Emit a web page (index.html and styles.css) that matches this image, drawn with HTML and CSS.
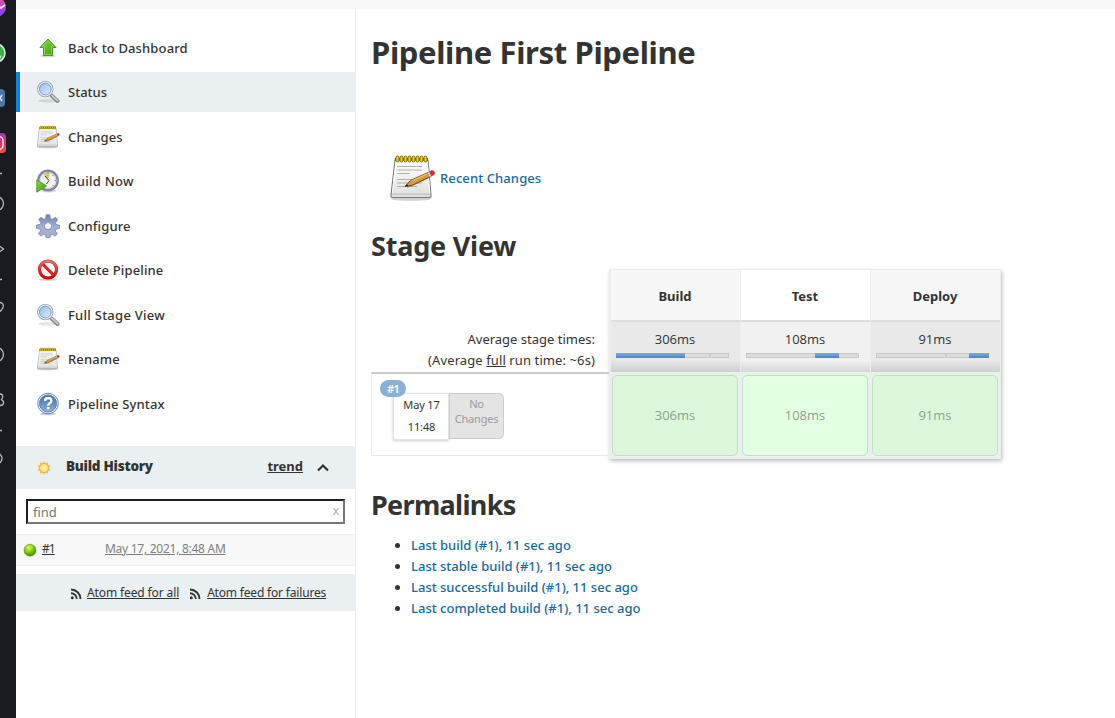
FILE: index.html
```
<!DOCTYPE html>
<html lang="en">
<head>
<meta charset="utf-8">
<title>First Pipeline</title>
<link rel="stylesheet" href="styles.css">
</head>
<body>
<svg class="defs" width="0" height="0" aria-hidden="true">
  <defs>
    <linearGradient id="gGreen" x1="0" y1="0" x2="1" y2="1"><stop offset="0" stop-color="#8fd85b"/><stop offset=".55" stop-color="#5cba1d"/><stop offset="1" stop-color="#3f9612"/></linearGradient>
    <linearGradient id="gLens" x1="0" y1="0" x2="1" y2="1"><stop offset="0" stop-color="#8fb6ea"/><stop offset="1" stop-color="#e6f2ff"/></linearGradient>
    <linearGradient id="gPaper" x1="0" y1="0" x2="0" y2="1"><stop offset="0" stop-color="#ffffff"/><stop offset="1" stop-color="#dededc"/></linearGradient>
    <linearGradient id="gGear" x1="0" y1="0" x2="0" y2="1"><stop offset="0" stop-color="#6685b1"/><stop offset=".5" stop-color="#a4afd3"/><stop offset="1" stop-color="#a9abd2"/></linearGradient>
    <linearGradient id="gRed" x1="0" y1="0" x2="0" y2="1"><stop offset="0" stop-color="#e96a6a"/><stop offset="1" stop-color="#cb0808"/></linearGradient>
    <linearGradient id="gHelp" x1="0" y1="0" x2="0" y2="1"><stop offset="0" stop-color="#3f6dab"/><stop offset="1" stop-color="#8fb1dc"/></linearGradient>
    <linearGradient id="gInsta" x1="0" y1="0" x2="0" y2="1"><stop offset="0" stop-color="#a335b8"/><stop offset=".5" stop-color="#e02c6d"/><stop offset="1" stop-color="#f4583c"/></linearGradient>
    <linearGradient id="gMess" x1="0" y1="0" x2="0" y2="1"><stop offset="0" stop-color="#f25a86"/><stop offset=".5" stop-color="#c83be0"/><stop offset="1" stop-color="#5a4cf5"/></linearGradient>
    <radialGradient id="gBall" cx=".4" cy=".3" r=".7"><stop offset="0" stop-color="#e4f96a"/><stop offset=".4" stop-color="#9bd817"/><stop offset="1" stop-color="#3d8500"/></radialGradient>
    <radialGradient id="gSun"><stop offset="0" stop-color="#fffbd0"/><stop offset="1" stop-color="#ffd84a"/></radialGradient>
    <symbol id="search" viewBox="0 0 24 24">
      <ellipse cx="12" cy="20.700" rx="10" ry="1.700" fill="#000" opacity=".1"/>
      <path d="M15.500 15.500L21.500 21" stroke="#85898b" stroke-width="4" stroke-linecap="round"/>
      <path d="M16 15.500L21.500 20.500" stroke="#c6c8c9" stroke-width="1.800" stroke-linecap="round"/>
      <circle cx="9.300" cy="9.100" r="7.300" fill="url(#gLens)" stroke="#9ea3a5" stroke-width="1.800"/>
      <circle cx="9.300" cy="9.100" r="6.800" fill="none" stroke="#f1f3f3" stroke-width="1.100"/>
      <circle cx="9.300" cy="9.100" r="5.800" fill="none" stroke="#6b92c9" stroke-width=".8"/>
    </symbol>
    <symbol id="notepad" viewBox="0 0 48 48">
      <ellipse cx="23" cy="45" rx="20" ry="1.700" fill="#000" opacity=".18"/>
      <path d="M7 6h33l3 35v1.500q0 1-1.500 1H4.500q-1.500 0-1.500-1V41Z" fill="url(#gPaper)" stroke="#777975" stroke-width="1.100"/>
      <path d="M8 7.500h31.300l2.500 32.200H4.400Z" fill="none" stroke="#fff"/>
      <path d="M4 40h38" stroke="#aaa"/>
      <path d="M9 12.500h25M9 16h25M9 19.500h13M9 25.500h25M9 29h25M9 32.500h20" stroke="#b0b0b0" stroke-width="1"/>
      <path d="M7 5.500h33" stroke="#7d7434" stroke-width="3"/>
      <g fill="#eed12b" stroke="#6e6000" stroke-width=".9"><rect x="8" y="2" width="3" height="6" rx="1.500"/><rect x="12" y="2" width="3" height="6" rx="1.500"/><rect x="16" y="2" width="3" height="6" rx="1.500"/><rect x="20" y="2" width="3" height="6" rx="1.500"/><rect x="24" y="2" width="3" height="6" rx="1.500"/><rect x="28" y="2" width="3" height="6" rx="1.500"/><rect x="32" y="2" width="3" height="6" rx="1.500"/><rect x="36" y="2" width="3" height="6" rx="1.500"/></g>
      <path d="M19 33L44 22" stroke="#000" stroke-width="2" opacity=".18"/>
      <path d="M17 32.500l5.500-6 17.500-8 2 4.300L25 31Z" fill="#d69b38" stroke="#6b4410" stroke-width="1"/>
      <path d="M23.500 27l16-7.300" stroke="#f0c274" stroke-width="1.300"/>
      <path d="M17 32.500l2-2.400 1.200 1.900Z" fill="#222"/>
      <path d="M39.500 18.600l2 4.300 2-1-2-4.300Z" fill="#ddd" stroke="#888" stroke-width=".5"/>
      <path d="M41.500 17.600l2 4.300 2.300-1.100q1.500-1 .7-2.700-.9-1.800-2.600-1.500Z" fill="#e5262d" stroke="#b33" stroke-width=".6"/>
    </symbol>
    <symbol id="rss" viewBox="0 0 12 12"><g fill="none" stroke="#333" stroke-width="1.900"><path d="M1 1.500a9.500 9.500 0 0 1 9.500 9.500"/><path d="M1 5.200a5.800 5.800 0 0 1 5.800 5.800"/></g><circle cx="2.300" cy="9.700" r="1.500" fill="#333"/></symbol>
  </defs>
</svg>
<div class="app">
  <div class="rail">
    <svg width="16" height="718" viewBox="0 0 16 718">
      <circle cx="-4" cy="7" r="10" fill="url(#gMess)"/><path d="M-4 9l3-3 2 2 4-3" fill="none" stroke="#fff" stroke-width="1.600"/>
      <circle cx="-4" cy="53" r="9" fill="#35b449" stroke="#e8e8e8" stroke-width="1.500"/><path d="M-2 56l3 1" stroke="#fff" stroke-width="2"/>
      <rect x="-13" y="89" width="18" height="18" rx="4" fill="#4a76a8"/><path d="M2 95l-2 3 2 3" fill="none" stroke="#dfe8f2" stroke-width="1.500"/>
      <rect x="-14" y="133" width="20" height="20" rx="4" fill="url(#gInsta)"/><rect x="-11" y="136.500" width="14" height="13" rx="4" fill="none" stroke="#fff" stroke-width="1.400"/>
      <g fill="none" stroke="#b8bcc0" stroke-width="1.300">
        <path d="M0 173.500h2M0 279.500h2M0 430.500h2"/>
        <circle cx="-3.500" cy="203.500" r="7"/><path d="M-2 245l5.500 4-5.500 4"/>
        <path d="M-4 315l5.500-5q3-3.500 1-6.500-3-2.500-6.500 1"/><circle cx="-3.500" cy="354.500" r="7"/>
        <path d="M0 394q3.500 0 2.500 3.500l-1 2 2 2q.5 4-3.500 4"/><circle cx="-3.500" cy="458.500" r="5.500"/>
      </g>
    </svg>
  </div>
  <div class="page">
    <div class="topbar"></div>
    <div class="columns">
      <aside class="side">
        <nav class="tasks">
          <a class="task"><svg viewBox="0 0 24 24"><ellipse cx="12" cy="20" rx="8" ry="1.500" fill="#000" opacity=".15"/><path d="M12 3L20 11.500H16.500V19.500H7.500V11.500H4Z" fill="url(#gGreen)" stroke="#459b18"/><path d="M12 4.800L17.500 10.700H15.500V18.500H8.500V10.700H6.500Z" fill="none" stroke="#a5e37b" stroke-width=".6"/></svg><span>Back to Dashboard</span></a>
          <a class="task active"><svg><use href="#search"/></svg><span>Status</span></a>
          <a class="task"><svg><use href="#notepad"/></svg><span>Changes</span></a>
          <a class="task"><svg viewBox="0 0 24 24"><ellipse cx="13" cy="22" rx="8" ry="1.500" fill="#000" opacity=".15"/><circle cx="12" cy="11.500" r="9.700" fill="#f1f1ee" stroke="#8586a4" stroke-width="2.400"/><circle cx="12" cy="11.500" r="8" fill="none" stroke="#c9c9d6" stroke-width=".8"/><path d="M12 11.500L7.500 5Q11 3 13.500 4Z" fill="#e2c254"/><path d="M9 7l4 4.500-2.500 3.500" fill="none" stroke="#444" stroke-width="1"/><path d="M12 3v1.500M20 11.500h-1.500M17.500 6l-1 1M17.500 17l-1-1" stroke="#888"/><path d="M.8 10.800L10.500 17 .8 23.200Z" fill="url(#gGreen)" stroke="#3f8a1b" stroke-width=".8"/></svg><span class="wide">Build Now</span></a>
          <a class="task"><svg viewBox="0 0 24 24"><path fill="url(#gGear)" stroke="#7880aa" stroke-width=".8" fill-rule="evenodd" d="M10.300.8h3.400l.7 3.800 1.800.8 3.200-2.200 2.300 2.400-2.200 3.100.8 1.800 3.300.7v3.200l-3.500.7-.8 1.800 2.100 3-2.300 2.300-3-2.100-1.700.8-.7 3.300h-3.400l-.7-3.500-1.700-.7-3.100 2.100-2.300-2.300 2.100-3.100-.7-1.700L.6 14.300v-3.200l3.500-.7.8-1.800-2.200-3.100 2.300-2.300 3.100 2.200 1.600-.8ZM12 8.600a3.500 3.500 0 1 0 .01 0Z"/></svg><span>Configure</span></a>
          <a class="task"><svg viewBox="0 0 24 24"><ellipse cx="12" cy="21.500" rx="9" ry="1.500" fill="#000" opacity=".18"/><circle cx="12" cy="11.500" r="8.500" fill="#fff" stroke="#c42a2a" stroke-width="3.200"/><path d="M6.200 5.700L17.800 17.300" stroke="#d42a2a" stroke-width="3.200"/><circle cx="12" cy="11.500" r="8.500" fill="none" stroke="url(#gRed)" stroke-width="2.500"/></svg><span>Delete Pipeline</span></a>
          <a class="task"><svg><use href="#search"/></svg><span class="wide">Full Stage View</span></a>
          <a class="task"><svg><use href="#notepad"/></svg><span>Rename</span></a>
          <a class="task"><svg viewBox="0 0 24 24"><ellipse cx="12" cy="22" rx="8" ry="1.300" fill="#000" opacity=".2"/><circle cx="12" cy="11.500" r="10.300" fill="#fff" stroke="#5d84b9" stroke-width="1"/><circle cx="12" cy="11.500" r="8.600" fill="url(#gHelp)" stroke="#4771ac" stroke-width=".8"/><path d="M9 9q0-3 3.200-3t3.200 2.800q0 1.700-2 2.600-1.200.7-1.200 2.300" fill="none" stroke="#fff" stroke-width="2.300"/><rect x="11" y="15" width="2.400" height="2.400" fill="#fff"/></svg><span>Pipeline Syntax</span></a>
        </nav>
        <section class="history">
          <header class="history-head">
            <svg class="sun" width="16" height="16" viewBox="0 0 16 16"><path d="M8 .8l1.300 2.700 3-1.300-.7 3 3 .4-2 2.400 2 2.400-3 .4.700 3-3-1.300L8 15.200l-1.300-2.700-3 1.300.7-3-3-.4 2-2.400-2-2.400 3-.4-.7-3 3 1.300Z" fill="#f8b84e"/><circle cx="8" cy="8" r="4.600" fill="url(#gSun)" stroke="#f0a63a" stroke-width=".8"/></svg>
            <b class="history-title">Build History</b>
            <a class="trend">trend</a>
            <svg class="chevron" width="14" height="9" viewBox="0 0 14 9"><path d="M2 7.500L7 2.500 12 7.500" fill="none" stroke="#333" stroke-width="2.200"/></svg>
          </header>
          <div class="find"><span>find</span><span class="clear">x</span></div>
          <div class="build-row">
            <svg width="14" height="14" viewBox="0 0 14 14"><circle cx="7" cy="7.200" r="6" fill="url(#gBall)" stroke="#5c9a17" stroke-width=".6"/></svg>
            <a class="num">#1</a><a class="date">May 17, 2021, 8:48 AM</a>
          </div>
          <footer class="feeds">
            <svg><use href="#rss"/></svg><a class="feed-all">Atom feed for all</a>
            <svg><use href="#rss"/></svg><a class="feed-fail">Atom feed for failures</a>
          </footer>
        </section>
      </aside>
      <main class="main">
        <h1>Pipeline First Pipeline</h1>
        <div class="recent"><svg width="48" height="48"><use href="#notepad"/></svg><a>Recent Changes</a></div>
        <h2 class="h-stage">Stage View</h2>
        <div class="stage">
          <div class="runs">
            <div class="averages"><div>Average stage times:</div><div class="full-run">(Average <u>full</u> run time: ~6s)</div></div>
            <div class="run">
              <span class="badge">#1</span>
              <div class="stamp"><span>May 17</span><span>11:48</span></div>
              <div class="nochange">No<br>Changes</div>
            </div>
          </div>
          <div class="table">
            <div class="col odd"><div class="th">Build</div><div class="avg"><span>306ms</span><div class="bar"><i class="tick" style="left:92px"></i><i class="fill" style="left:0;width:69px"></i></div></div><div class="cell"><div>306ms</div></div></div>
            <div class="col"><div class="th">Test</div><div class="avg"><span>108ms</span><div class="bar"><i class="fill" style="left:69px;width:24px"></i></div></div><div class="cell"><div>108ms</div></div></div>
            <div class="col odd"><div class="th">Deploy</div><div class="avg"><span>91ms</span><div class="bar"><i class="tick" style="left:68px"></i><i class="fill" style="left:93px;width:20px"></i></div></div><div class="cell"><div>91ms</div></div></div>
          </div>
        </div>
        <h2 class="h-perma">Permalinks</h2>
        <ul class="links">
          <li><a>Last build (#1), 11 sec ago</a></li>
          <li><a>Last stable build (#1), 11 sec ago</a></li>
          <li><a>Last successful build (#1), 11 sec ago</a></li>
          <li><a>Last completed build (#1), 11 sec ago</a></li>
        </ul>
      </main>
    </div>
  </div>
</div>
</body>
</html>
```
FILE: styles.css
```
* { box-sizing: border-box; }
body { margin: 0; height: 718px; overflow: hidden; background: #fff; color: #333; font: 13px/20px "Noto Sans", "Open Sans", sans-serif; }
.defs { position: absolute; }
.app { display: flex; height: 718px; }
.rail { width: 16px; flex: none; background: #181c20; }
.rail svg { display: block; }
.page { flex: 1; display: flex; flex-direction: column; }
.topbar { height: 9px; background: #f8f8f8; }
.columns { flex: 1; display: flex; }
.side { width: 340px; flex: none; border-right: 1px solid #eaeff2; padding-top: 18.5px; }
.tasks { display: flex; flex-direction: column; gap: 4.5px; }
.task { display: flex; align-items: center; gap: 8px; height: 40px; padding-left: 20px; font-weight: 500; letter-spacing: .14px; }
.task .wide { letter-spacing: .26px; }
.task svg { width: 24px; height: 24px; }
.active { background: #eaeff2; border-left: 4px solid #0b86d8; padding-left: 16px; letter-spacing: 0; }
.history { margin-top: 22.5px; }
.history-head { display: flex; align-items: center; height: 43px; background: #eaeff2; padding: 0 25px 3px 20px; font-weight: 700; }
.sun { margin-top: 4px; }
.chevron { margin-top: 3px; }
.history-title { margin-left: 14px; flex: 1; font-size: 13.5px; letter-spacing: -.26px; }
.trend { text-decoration: underline; margin-right: 13px; }
.find { display: flex; justify-content: space-between; align-items: center; height: 25px; margin: 10px; padding: 0 4px 0 5px; border: 2px solid; border-color: #1e1e1e #767676 #767676 #1e1e1e; color: #777; }
.clear { color: #aaa; font-size: 12px; margin-top: -2px; }
.build-row { display: flex; align-items: center; height: 32px; background: #f8f8f8; border: solid #eaeff2; border-width: 1px 0; padding: 0 0 2px 7px; font-size: 12px; }
.build-row svg { margin-top: 2px; }
.build-row a { text-decoration: underline; }
.num { margin: 0 50px 0 5px; letter-spacing: -1px; width: 13px; white-space: nowrap; }
.date { color: #808080; letter-spacing: -.27px; }
.feeds { display: flex; align-items: center; height: 37px; margin-top: 8px; padding-left: 54px; background: #eaeff2; font-size: 12px; }
.feeds svg { width: 12px; height: 12px; margin-top: 3px; }
.feeds a { text-decoration: underline; margin: 0 10px 0 5px; }
.feeds .feed-all { letter-spacing: -.12px; }
.feeds .feed-fail { letter-spacing: -.18px; margin-left: 6px; }
.main { flex: 1; padding: 21px 0 0 15px; }
h1, h2 { margin: 0; font-weight: 700; }
h1 { font-size: 31px; line-height: 44px; letter-spacing: -.37px; }
h2 { font-size: 27px; line-height: 38px; }
.recent { display: flex; align-items: center; gap: 4px; margin-top: 80px; padding-left: 17px; height: 48px; color: #1569a3; font-weight: 500; letter-spacing: .1px; }
.h-stage { margin-top: 25px; letter-spacing: -.2px; }
.stage { display: flex; margin-top: 3px; height: 191px; }
.runs { width: 238px; padding-top: 61px; }
.averages { text-align: right; line-height: 21px; padding-right: 14px; }
.full-run { letter-spacing: .1px; }
.run { position: relative; display: flex; height: 84px; margin-top: 1px; padding: 18px 0 0 21px; border: 1px solid #e6e9ea; border-top: 2px solid #ccc; border-right: 0; }
.badge { position: absolute; left: 8px; top: 6px; width: 26px; height: 17px; border-radius: 9px; background: #8bb0d6; color: #fff; font-size: 11px; line-height: 17px; text-align: center; font-weight: 600; letter-spacing: -.6px; }
.stamp { display: flex; flex-direction: column; width: 56px; height: 47px; margin-top: 1px; background: #fff; border: 1px solid #e2e5e6; box-shadow: 0 1px 3px #ccc; text-align: center; font-size: 11px; line-height: 22px; padding-left: 1px; letter-spacing: -.15px; }
.nochange { width: 55px; height: 46px; margin-top: 1px; background: #e4e4e4; border: 1px solid #ccc; border-radius: 0 5px 5px 0; color: #999; font-size: 11px; line-height: 15px; text-align: center; padding-top: 2px; letter-spacing: -.2px; }
.table { display: flex; width: 392px; height: 190px; margin-top: 1px; background: #e9eef0; padding: 1px 2px 2px; box-shadow: 1px 2px 4px #bbb; gap: 1px; }
.col { width: 129px; flex: none; display: flex; flex-direction: column; text-align: center; }
.th { height: 50px; line-height: 52px; background: #fff; font-weight: 700; padding-right: 1px; }
.odd .th { background: #f7f7f7; }
.avg { height: 52px; border-top: 2px solid #ddd; background: linear-gradient(#f1f1f1 76%, #d7d7d7); padding: 7px 0 0 5px; }
.odd .avg { background: linear-gradient(#e9e9e9 76%, #cfcfcf); }
.avg span { display: block; padding-right: 6px; font-family: "Open Sans"; }
.bar { position: relative; width: 113px; height: 5px; margin-top: 4px; background: #dcdcdc; border: 1px solid #c8c8c8; }
.fill { position: absolute; top: -1px; height: 5px; margin-left: -1px; background: linear-gradient(#86abdc, #4a7fd0); }
.tick { position: absolute; top: 0; width: 2px; height: 3px; background: #c8c8c8; }
.cell { flex: 1; background: #e6f3e6; padding: 3px 2px 1px 1px; font-family: "Open Sans"; }
.cell div { height: 81px; border: 1px solid #c6dcc8; border-radius: 5px; background: #e3ffe3; color: #8f9f8f; line-height: 79px; }
.odd .cell div { background: #dcf6dc; }
.h-perma { margin-top: 27px; letter-spacing: -.68px; }
.links { margin: 11px 0 0; padding-left: 40px; line-height: 21px; font-weight: 500; }
.links a { color: #1569a3; }
```
